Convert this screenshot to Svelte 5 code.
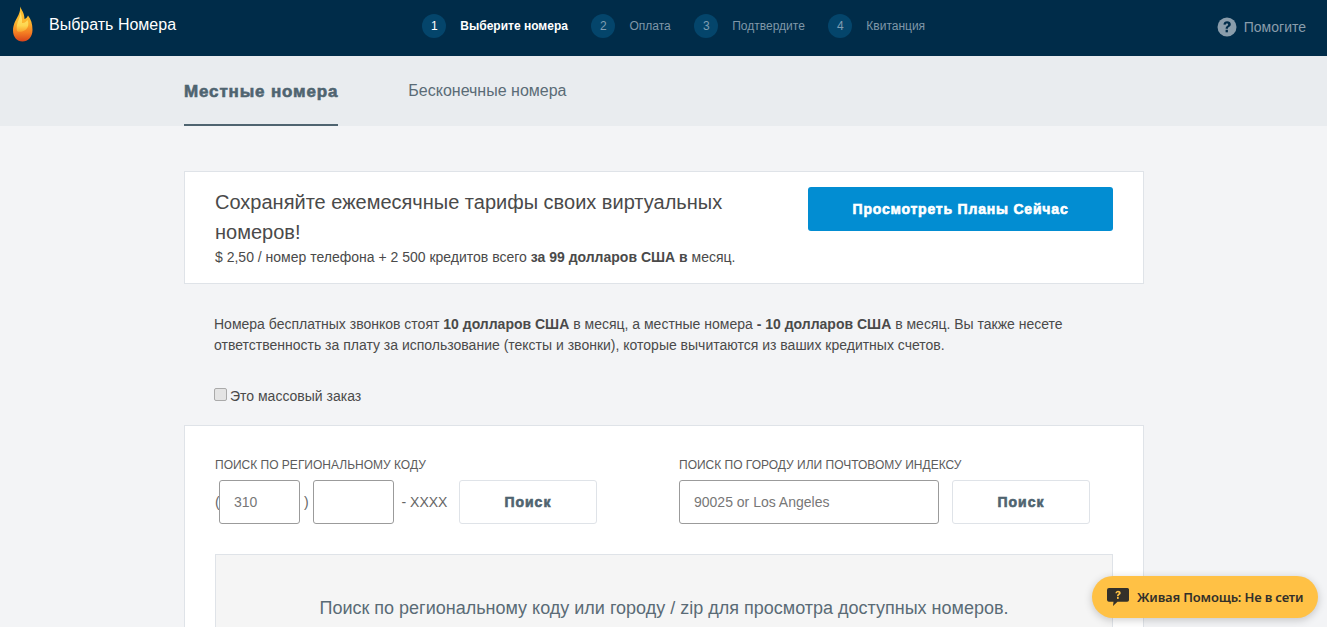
<script>
  const steps = [
    { n: 1, label: 'Выберите номера', active: true },
    { n: 2, label: 'Оплата' },
    { n: 3, label: 'Подтвердите' },
    { n: 4, label: 'Квитанция' }
  ];
</script>

<div class="page">
  <header class="top">
    <div class="brand">
      <svg class="flame" width="20" height="36" viewBox="0 0 20 36" aria-hidden="true">
        <defs>
          <linearGradient id="fl" x1="0" y1="0" x2="0" y2="1">
            <stop offset="0" stop-color="#fcc02f" />
            <stop offset="0.45" stop-color="#fbb52e" />
            <stop offset="0.75" stop-color="#f47d22" />
            <stop offset="1" stop-color="#d8431b" />
          </linearGradient>
          <linearGradient id="fh" x1="0" y1="0" x2="0" y2="1">
            <stop offset="0" stop-color="#ffe97f" />
            <stop offset="0.7" stop-color="#fdd64f" />
            <stop offset="1" stop-color="#f9a22c" />
          </linearGradient>
        </defs>
        <path d="M7 .5C8.500 4 11.500 7 11.500 13C13 12.500 14.500 11 15 9.500C18 13 19.500 18 19.500 24C19.500 31 15 35.500 9.500 35.500C4 35.500 0 31 0 24.500C0 18 3.500 13 5.500 9C6.800 6 7.500 3.500 7 .5z" fill="url(#fl)" />
        <path d="M7.500 5C8 9 9.500 13 9 17C11.500 17.500 13.500 15.500 14.500 14C16 18 15.500 21 13 23.500C10 26 5.500 26.500 4 25C3 20 5 15 6.500 11.500C7.300 9.500 7.500 7.500 7.500 5z" fill="url(#fh)" />
      </svg>
      <span class="brand-name">Выбрать Номера</span>
    </div>
    <ol class="steps">
      {#each steps as s}
        <li class="step" class:active={s.active}>
          <span class="num">{s.n}</span>
          <span class="lbl">{s.label}</span>
        </li>
      {/each}
    </ol>
    <div class="help">
      <svg width="20" height="20" viewBox="0 0 20 20" aria-hidden="true">
        <circle cx="10" cy="10" r="9.500" fill="#8a9dab" />
        <path d="M6.400 7.600C6.600 5.500 8.100 4.300 10.100 4.300c2.200 0 3.700 1.200 3.700 3 0 1.500-.9 2.200-1.800 2.800-.8.500-1.100.9-1.100 1.700H8.600c0-1.500.4-2.200 1.500-2.900.7-.5 1.100-.8 1.100-1.400 0-.7-.5-1.100-1.200-1.100-.8 0-1.300.5-1.400 1.300z" fill="#002c49" />
        <rect x="8.600" y="12.800" width="2.300" height="2.500" fill="#002c49" />
      </svg>
      <span>Помогите</span>
    </div>
  </header>

  <nav class="tabs">
    <div class="tabs-in">
      <span class="tab current">Местные номера</span>
      <span class="tab">Бесконечные номера</span>
    </div>
  </nav>

  <main class="main">
    <section class="promo card">
      <div class="promo-text">
        <h2>Сохраняйте ежемесячные тарифы своих виртуальных номеров!</h2>
        <p>$ 2,50 / номер телефона + 2 500 кредитов всего <b>за 99 долларов США в</b> месяц.</p>
      </div>
      <button class="cta">Просмотреть Планы Сейчас</button>
    </section>

    <p class="note">
      Номера бесплатных звонков стоят <b>10 долларов США</b> в месяц, а местные номера <b>- 10 долларов США</b> в месяц. Вы также несете ответственность за плату за использование (тексты и звонки), которые вычитаются из ваших кредитных счетов.
    </p>

    <label class="bulk"><input type="checkbox" /><span>Это массовый заказ</span></label>

    <section class="search card">
      <div class="forms">
        <div class="col-area">
          <div class="cap">ПОИСК ПО РЕГИОНАЛЬНОМУ КОДУ</div>
          <div class="row">
            <span class="paren">(</span>
            <input class="code" placeholder="310" />
            <span class="paren close">)</span>
            <input class="code" />
            <span class="xxxx">- XXXX</span>
            <button class="find">Поиск</button>
          </div>
        </div>
        <div class="col-city">
          <div class="cap">ПОИСК ПО ГОРОДУ ИЛИ ПОЧТОВОМУ ИНДЕКСУ</div>
          <div class="row">
            <input class="city" placeholder="90025 or Los Angeles" />
            <button class="find">Поиск</button>
          </div>
        </div>
      </div>
      <div class="results">Поиск по региональному коду или городу / zip для просмотра доступных номеров.</div>
    </section>
  </main>

  <div class="chat">
    <svg width="22" height="18" viewBox="0 0 22 18" aria-hidden="true">
      <path d="M2 0h18.500A1.500 1.500 0 0 1 22 1.500v10.500a1.800 1.800 0 0 1-1.800 1.800H10.500L6 18l.5-4.200H2A2 2 0 0 1 0 12V2A2 2 0 0 1 2 0z" fill="#33302a" />
      <path d="M8.400 5.200C8.600 3.700 9.700 2.800 11 2.800c1.500 0 2.700.8 2.700 2.200 0 1-.6 1.500-1.300 2-.5.300-.8.600-.8 1.200H10c0-1 .3-1.600 1-2.100.5-.3.800-.6.800-1 0-.5-.3-.8-.9-.8-.6 0-.9.400-1 .9z" fill="#ffc145" />
      <rect x="10" y="9" width="1.700" height="1.900" fill="#ffc145" />
    </svg>
    <span>Живая Помощь: Не в сети</span>
  </div>
</div>

<style>
  :global(body) {
    margin: 0;
    background: #f3f4f6;
    font-family: "Liberation Sans", Arial, sans-serif;
    color: #4a4a4a;
  }
  .page {
    height: 627px;
    overflow: hidden;
    position: relative;
  }
  .top {
    height: 56px;
    background: #002c49;
    display: grid;
    grid-template-columns: 1fr auto 1fr;
    align-items: center;
  }
  .brand {
    display: flex;
    align-items: flex-start;
    align-self: start;
    padding: 6px 0 0 13px;
  }
  .brand-name {
    margin: 10px 0 0 16px;
    color: #fff;
    font-size: 16px;
  }
  .steps {
    list-style: none;
    margin: 0 0 4px 20.500px;
    padding: 0;
    display: flex;
    gap: 23.500px;
  }
  .step {
    display: flex;
    align-items: center;
    gap: 14px;
    font-size: 12px;
    color: #7f97a8;
  }
  .num {
    width: 24px;
    height: 24px;
    border-radius: 50%;
    background: #04456b;
    display: flex;
    align-items: center;
    justify-content: center;
    color: #7f9db2;
  }
  .step.active .lbl { color: #fff; font-weight: bold; }
  .step.active .num { color: #fff; }
  .help {
    justify-self: end;
    padding: 0 21px 2px 0;
    display: flex;
    align-items: center;
    gap: 7px;
    color: #8a9dab;
    font-size: 14px;
  }
  .tabs {
    height: 70px;
    background: #e9ecef;
  }
  .tabs-in {
    margin-left: 184px;
    display: flex;
    gap: 70px;
    height: 70px;
  }
  .tab {
    height: 68px;
    line-height: 70px;
    font-size: 16px;
    color: #5a6b76;
  }
  .tab.current {
    font-size: 17px;
    font-weight: bold;
    letter-spacing: .85px;
    line-height: 71px;
    color: #4f6470;
    border-bottom: 2px solid #4f6470;
    -webkit-text-stroke: 0.6px #4f6470;
  }
  .main {
    width: 960px;
    margin: 45px 0 0 184px;
  }
  .card {
    background: #fff;
    border: 1px solid #dfe3e8;
    box-sizing: border-box;
  }
  .promo {
    height: 113px;
    padding: 15px 30px 0;
    display: flex;
    justify-content: space-between;
    align-items: flex-start;
  }
  .promo-text { width: 560px; }
  .promo h2 {
    margin: 0;
    font-size: 20px;
    font-weight: normal;
    line-height: 30px;
    color: #4a4a4a;
  }
  .promo p {
    margin: 0;
    font-size: 14px;
    line-height: 20px;
  }
  .cta {
    width: 305px;
    height: 44px;
    border: 0;
    border-radius: 3px;
    background: #028dd2;
    color: #fff;
    font: bold 14px "Liberation Sans", Arial, sans-serif;
    letter-spacing: .8px;
    -webkit-text-stroke: 0.6px #fff;
  }
  .note {
    margin: 30px 30px 0;
    font-size: 14px;
    line-height: 21px;
    color: #4a4a4a;
  }
  .bulk {
    display: flex;
    align-items: center;
    margin: 30px 0 0 30px;
    font-size: 14px;
    height: 20px;
  }
  .bulk input {
    appearance: none;
    box-sizing: border-box;
    width: 13px;
    height: 13px;
    margin: -3px 3px 0 0;
    background: #e4e4e4;
    border: 1px solid #aaa;
    border-radius: 2px;
  }
  .search {
    margin-top: 19px;
    height: 300px;
    padding: 31px 30px 0;
  }
  .forms { display: flex; }
  .col-area { width: 464px; }
  .cap {
    font-size: 12px;
    line-height: 16px;
    color: #5c5c5c;
    margin-bottom: 7px;
  }
  .row { display: flex; align-items: center; }
  .paren { font-size: 14px; color: #666; width: 4px; }
  .paren.close { margin: 0 5px 0 4px; }
  input.code, input.city {
    box-sizing: border-box;
    height: 44px;
    border: 1px solid #9b9b9b;
    border-radius: 3px;
    font: 14px "Liberation Sans", Arial, sans-serif;
    background: #fff;
    outline: none;
    padding: 0 14px;
    color: #555;
  }
  input::placeholder { color: #777; opacity: 1; }
  input.code { width: 81px; }
  input.city { width: 260px; }
  .xxxx { font-size: 14px; color: #666; margin: 0 11.500px 0 7.500px; }
  .find {
    width: 138px;
    height: 44px;
    background: #fff;
    border: 1px solid #dfe3e8;
    border-radius: 3px;
    font: bold 14px "Liberation Sans", Arial, sans-serif;
    letter-spacing: 1px;
    color: #4f6470;
    -webkit-text-stroke: 0.6px #4f6470;
  }
  .col-city .find { margin-left: 13px; }
  .results {
    margin-top: 30px;
    height: 200px;
    background: #f5f5f5;
    border: 1px solid #dfe3e8;
    text-align: center;
    font-size: 18px;
    color: #5a6b76;
    padding-top: 43px;
    box-sizing: border-box;
  }
  .chat {
    position: absolute;
    left: 1092px;
    top: 576px;
    width: 226px;
    height: 42px;
    box-sizing: border-box;
    border-radius: 21px;
    background: #ffc145;
    box-shadow: 0 2px 8px rgba(0, 0, 0, .2);
    display: flex;
    align-items: center;
    padding-left: 15px;
    gap: 8px;
    font: 600 13px "Noto Sans", sans-serif;
    letter-spacing: -.17px;
    color: #33302a;
  }
</style>
